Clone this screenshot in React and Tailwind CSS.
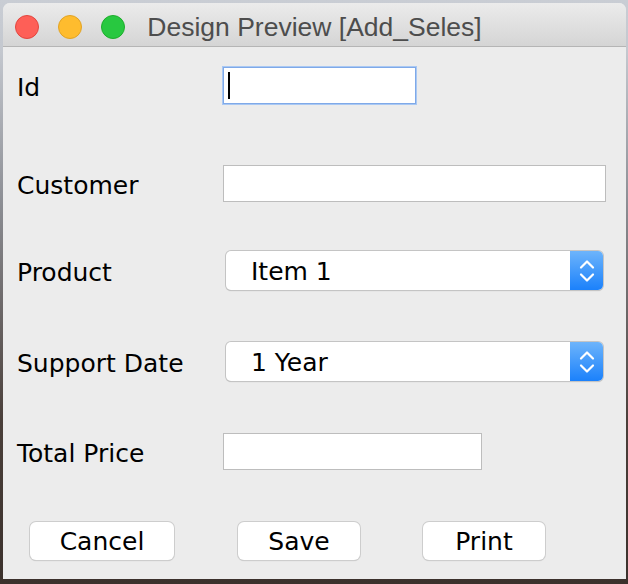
import React from "react";

const labelFont = { fontFamily: '"DejaVu Sans", "Liberation Sans", sans-serif' };

const Label = ({ children }) => (
  <div className="w-[220px] shrink-0 pl-[14px] pt-[3px] text-[25px] leading-none text-black" style={labelFont}>
    {children}
  </div>
);

const Chevrons = () => (
  <svg width="16" height="26" viewBox="0 0 16 26" fill="none">
    <path d="M2 9.5 L8 3.5 L14 9.5" stroke="white" strokeWidth="2.2" strokeLinecap="round" strokeLinejoin="round" />
    <path d="M2 16.5 L8 22.5 L14 16.5" stroke="white" strokeWidth="2.2" strokeLinecap="round" strokeLinejoin="round" />
  </svg>
);

const Combo = ({ value }) => (
  <div className="ml-[3px] flex h-[39px] w-[377px] overflow-hidden rounded-[5px] bg-white shadow-[0_0_0_1px_#c4c4c4,0_1px_1px_rgba(0,0,0,0.25)]">
    <div className="flex flex-1 items-center pl-[25px] pt-[2px] text-[25px] leading-none text-black" style={labelFont}>
      {value}
    </div>
    <div className="flex w-[33px] items-center justify-center bg-[linear-gradient(to_bottom,#6db4fb,#1b81fb)]">
      <Chevrons />
    </div>
  </div>
);

const Button = ({ children, width }) => (
  <button
    className={`flex h-[38px] ${width} items-center justify-center rounded-[6px] bg-white pt-[1px] text-[25px] leading-none text-black shadow-[0_0_0_1px_#cdcdcd,0_1px_1px_rgba(0,0,0,0.2)]`}
    style={labelFont}
  >
    {children}
  </button>
);

export default function App() {
  return (
    <div className="h-[584px] w-[628px] overflow-hidden bg-[linear-gradient(to_bottom,#c9cdd4_0px,#c4c8cf_50px,#8d8f95_200px,#4a3f3a_420px,#3b312c_100%)] pl-[3px] pt-[3px]">
      <div className="flex h-[576px] w-[623px] flex-col overflow-hidden rounded-t-[7px] bg-[#ececec]">
        {/* Title bar */}
        <div className="relative flex h-[44px] shrink-0 items-center justify-center border-b border-[#b5b5b5] bg-[linear-gradient(to_bottom,#ebebeb,#d5d5d5)] pt-[5px]">
          <div className="absolute left-[12px] top-[12px] flex gap-[19px]">
            <div className="h-[24px] w-[24px] rounded-full border border-[#e2463f] bg-[#fe5f57]" />
            <div className="h-[24px] w-[24px] rounded-full border border-[#e1a325] bg-[#febc2e]" />
            <div className="h-[24px] w-[24px] rounded-full border border-[#1dad2b] bg-[#28c840]" />
          </div>
          <span
            className="text-[26.5px] leading-none text-[#4d4d4d]"
            style={{ fontFamily: '"Liberation Sans", Arial, sans-serif' }}
          >
            Design Preview [Add_Seles]
          </span>
        </div>

        {/* Form */}
        <div className="flex flex-col pt-[20px]">
          <div className="flex h-[37px] items-center">
            <Label>Id</Label>
            <div className="flex h-[37px] w-[193px] items-center border border-[#7fa9e8] bg-white pl-[4px] shadow-[0_0_0_1px_#a9c8f3]">
              <div className="h-[27px] w-[2px] bg-black" />
            </div>
          </div>

          <div className="mt-[61px] flex h-[37px] items-center">
            <Label>Customer</Label>
            <div className="h-[37px] w-[383px] border border-[#bdbdbd] bg-white" />
          </div>

          <div className="mt-[49px] flex h-[39px] items-center">
            <Label>Product</Label>
            <Combo value="Item 1" />
          </div>

          <div className="mt-[52px] flex h-[39px] items-center">
            <Label>Support Date</Label>
            <Combo value="1 Year" />
          </div>

          <div className="mt-[52px] flex h-[37px] items-center">
            <Label>Total Price</Label>
            <div className="h-[37px] w-[259px] border border-[#bdbdbd] bg-white" />
          </div>

          <div className="mt-[52px] flex h-[38px] items-center pl-[27px]">
            <Button width="w-[144px]">Cancel</Button>
            <div className="ml-[64px]">
              <Button width="w-[122px]">Save</Button>
            </div>
            <div className="ml-[63px]">
              <Button width="w-[122px]">Print</Button>
            </div>
          </div>
        </div>
      </div>
    </div>
  );
}
